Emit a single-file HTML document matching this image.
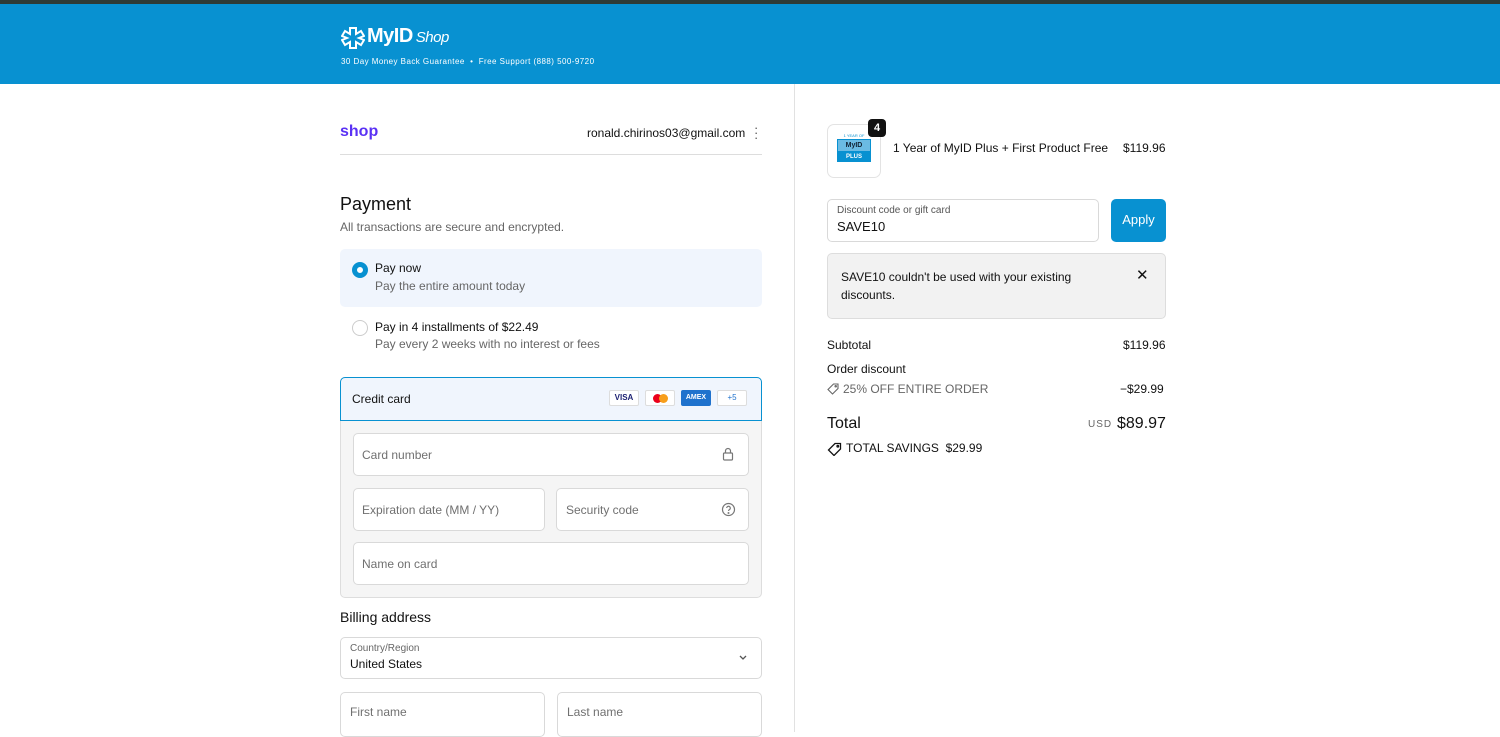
<!DOCTYPE html>
<html><head><meta charset="utf-8"><style>
*{box-sizing:border-box;margin:0;padding:0}
body{width:1500px;height:732px;overflow:hidden;background:#fff;font-family:"Liberation Sans",Arial,sans-serif;color:#111;position:relative}
.a{position:absolute}
.top{left:0;top:0;width:1500px;height:4px;background:#2e3b36}
.hdr{left:0;top:4px;width:1500px;height:80px;background:#0891d1;color:#fff}
.div{left:794px;top:84px;width:1px;height:648px;background:#e1e1e1}
.box{border:1px solid #d9d9d9;border-radius:5px;background:#fff}
.ph{font-size:12px;color:#707070}
.s13{font-size:12px}
.radio{width:16px;height:16px;border-radius:50%;border:1px solid #ccc;background:#fff}
.card{height:16px;border:1px solid #ddd;border-radius:2px;background:#fff;width:30px;font-size:8px;font-weight:bold;text-align:center;line-height:14px}
</style></head><body>
<div class="a top"></div>
<div class="a hdr">
 <svg class="a" style="left:341px;top:22px" width="24" height="24" viewBox="0 0 24 24" fill="none" stroke="#fff" stroke-width="2"><path d="M9 2h6v6l5-3 3 5-5 2 5 2-3 5-5-3v6H9v-6l-5 3-3-5 5-2-5-2 3-5 5 3z"/></svg>
 <div class="a" style="left:367px;top:21px;font-size:20px;font-weight:bold;letter-spacing:-0.5px">MyID<span style="font-weight:normal;font-style:italic;font-size:15px;margin-left:3px">Shop</span></div>
 <div class="a" style="left:341px;top:53px;font-size:8px;letter-spacing:0.45px">30 Day Money Back Guarantee &nbsp;•&nbsp; Free Support (888) 500-9720</div>
</div>
<div class="a div"></div>

<div class="a" style="left:340px;top:123px;font-size:16px;font-weight:bold;color:#5a31f4">shop</div>
<div class="a s13" style="left:587px;top:126px">ronald.chirinos03@gmail.com</div>
<div class="a" style="left:754px;top:125px;font-size:13px;color:#555;line-height:5px">·<br>·<br>·</div>
<div class="a" style="left:340px;top:154px;width:422px;height:1px;background:#ddd"></div>

<div class="a" style="left:340px;top:194px;font-size:18px">Payment</div>
<div class="a s13" style="left:340px;top:220px;color:#666">All transactions are secure and encrypted.</div>

<div class="a" style="left:340px;top:249px;width:422px;height:58px;background:#f0f5fd;border-radius:5px"></div>
<div class="a radio" style="left:352px;top:262px;border:5px solid #0891d1"></div>
<div class="a s13" style="left:375px;top:261px">Pay now</div>
<div class="a s13" style="left:375px;top:279px;color:#666">Pay the entire amount today</div>
<div class="a radio" style="left:352px;top:320px"></div>
<div class="a s13" style="left:375px;top:320px">Pay in 4 installments of $22.49</div>
<div class="a s13" style="left:375px;top:337px;color:#666">Pay every 2 weeks with no interest or fees</div>

<div class="a" style="left:340px;top:377px;width:422px;height:221px;border:1px solid #ddd;border-radius:5px;background:#f5f5f5"></div>
<div class="a" style="left:340px;top:377px;width:422px;height:44px;border:1px solid #0891d1;border-radius:5px 5px 0 0;background:#f0f5fd"></div>
<div class="a s13" style="left:352px;top:392px">Credit card</div>
<div class="a card" style="left:609px;top:390px;color:#1a1f71">VISA</div>
<div class="a card" style="left:645px;top:390px"><span style="display:inline-block;width:9px;height:9px;border-radius:50%;background:#eb001b;margin-top:3px"></span><span style="display:inline-block;width:9px;height:9px;border-radius:50%;background:#f79e1b;margin-left:-3px"></span></div>
<div class="a card" style="left:681px;top:390px;background:#1f72cd;color:#fff;border-color:#1f72cd;font-size:7px">AMEX</div>
<div class="a card" style="left:717px;top:390px;color:#1f72cd;font-weight:normal">+5</div>

<div class="a box" style="left:353px;top:433px;width:396px;height:43px"></div>
<div class="a ph" style="left:362px;top:448px">Card number</div>
<svg class="a" style="left:722px;top:447px" width="12" height="14" viewBox="0 0 12 14" fill="none" stroke="#777" stroke-width="1.2"><rect x="1.5" y="6" width="9" height="7" rx="1"/><path d="M3.5 6V4a2.5 2.5 0 015 0v2"/></svg>
<div class="a box" style="left:353px;top:488px;width:192px;height:43px"></div>
<div class="a ph" style="left:362px;top:503px">Expiration date (MM / YY)</div>
<div class="a box" style="left:556px;top:488px;width:193px;height:43px"></div>
<div class="a ph" style="left:566px;top:503px">Security code</div>
<svg class="a" style="left:721px;top:502px" width="15" height="15" viewBox="0 0 15 15" fill="none" stroke="#777" stroke-width="1.2"><circle cx="7.5" cy="7.5" r="6"/><path d="M5.7 6a1.8 1.8 0 113 1.4c-.8.5-1.2.8-1.2 1.6"/><circle cx="7.5" cy="11" r=".4"/></svg>
<div class="a box" style="left:353px;top:542px;width:396px;height:43px"></div>
<div class="a ph" style="left:362px;top:557px">Name on card</div>

<div class="a" style="left:340px;top:609px;font-size:14px">Billing address</div>
<div class="a box" style="left:340px;top:637px;width:422px;height:42px"></div>
<div class="a" style="left:350px;top:643px;font-size:10px;color:#666">Country/Region</div>
<div class="a s13" style="left:350px;top:657px">United States</div>
<svg class="a" style="left:738px;top:654px" width="10" height="8" viewBox="0 0 10 8" fill="none" stroke="#555" stroke-width="1.3"><path d="M2 2l3 3 3-3"/></svg>
<div class="a box" style="left:340px;top:692px;width:205px;height:45px"></div>
<div class="a ph" style="left:350px;top:705px">First name</div>
<div class="a box" style="left:557px;top:692px;width:205px;height:45px"></div>
<div class="a ph" style="left:567px;top:705px">Last name</div>

<!-- right -->
<div class="a" style="left:827px;top:124px;width:54px;height:54px;border:1px solid #e3e3e3;border-radius:7px;background:#fff"></div>
<div class="a" style="left:838px;top:133px;width:32px;height:8px;font-size:4px;color:#0891d1;text-align:center">1 YEAR OF</div>
<div class="a" style="left:837px;top:139px;width:34px;height:13px;background:#6bbbe3;border:1px solid #0891d1;font-size:7px;font-weight:bold;color:#123;text-align:center;line-height:11px">MyID</div>
<div class="a" style="left:837px;top:152px;width:34px;height:10px;background:#0891d1;color:#fff;font-size:6px;font-weight:bold;text-align:center;line-height:10px">PLUS</div>
<div class="a" style="left:868px;top:119px;width:18px;height:18px;border-radius:4px;background:#111;color:#fff;font-size:11px;font-weight:bold;text-align:center;line-height:18px">4</div>
<div class="a s13" style="left:893px;top:141px">1 Year of MyID Plus + First Product Free</div>
<div class="a s13" style="left:1123px;top:141px">$119.96</div>

<div class="a box" style="left:827px;top:199px;width:272px;height:43px"></div>
<div class="a" style="left:837px;top:205px;font-size:10px;color:#555">Discount code or gift card</div>
<div class="a s13" style="left:837px;top:219px;font-size:13px">SAVE10</div>
<div class="a" style="left:1111px;top:199px;width:55px;height:43px;border-radius:5px;background:#0891d1;color:#fff;font-size:13px;text-align:center;line-height:41px">Apply</div>

<div class="a" style="left:827px;top:253px;width:339px;height:66px;border:1px solid #ddd;border-radius:5px;background:#f2f2f2"></div>
<div class="a s13" style="left:841px;top:268px;width:250px;line-height:18px">SAVE10 couldn't be used with your existing discounts.</div>
<div class="a" style="left:1136px;top:266px;font-size:15px">✕</div>

<div class="a s13" style="left:827px;top:338px">Subtotal</div>
<div class="a s13" style="left:1123px;top:338px">$119.96</div>
<div class="a s13" style="left:827px;top:362px">Order discount</div>
<svg class="a" style="left:827px;top:383px" width="12" height="12" viewBox="0 0 12 12" fill="none" stroke="#666" stroke-width="1.1"><path d="M6.5 1H11v4.5L5.5 11 1 6.5z"/><circle cx="8.7" cy="3.3" r=".7"/></svg>
<div class="a s13" style="left:843px;top:382px;color:#666">25% OFF ENTIRE ORDER</div>
<div class="a s13" style="left:1120px;top:382px">−$29.99</div>
<div class="a" style="left:827px;top:415px;font-size:16px">Total</div>
<div class="a" style="left:1088px;top:419px;font-size:10px;color:#666;letter-spacing:1px">USD</div>
<div class="a" style="left:1117px;top:415px;font-size:16px">$89.97</div>
<svg class="a" style="left:827px;top:442px" width="15" height="14" viewBox="0 0 15 14" fill="none" stroke="#111" stroke-width="1.3"><path d="M8 1.5h5.5V7L7 13.5 1.5 8z"/><circle cx="10.8" cy="4.2" r=".8"/></svg>
<div class="a s13" style="left:846px;top:441px">TOTAL SAVINGS &nbsp;$29.99</div>
</body></html>
